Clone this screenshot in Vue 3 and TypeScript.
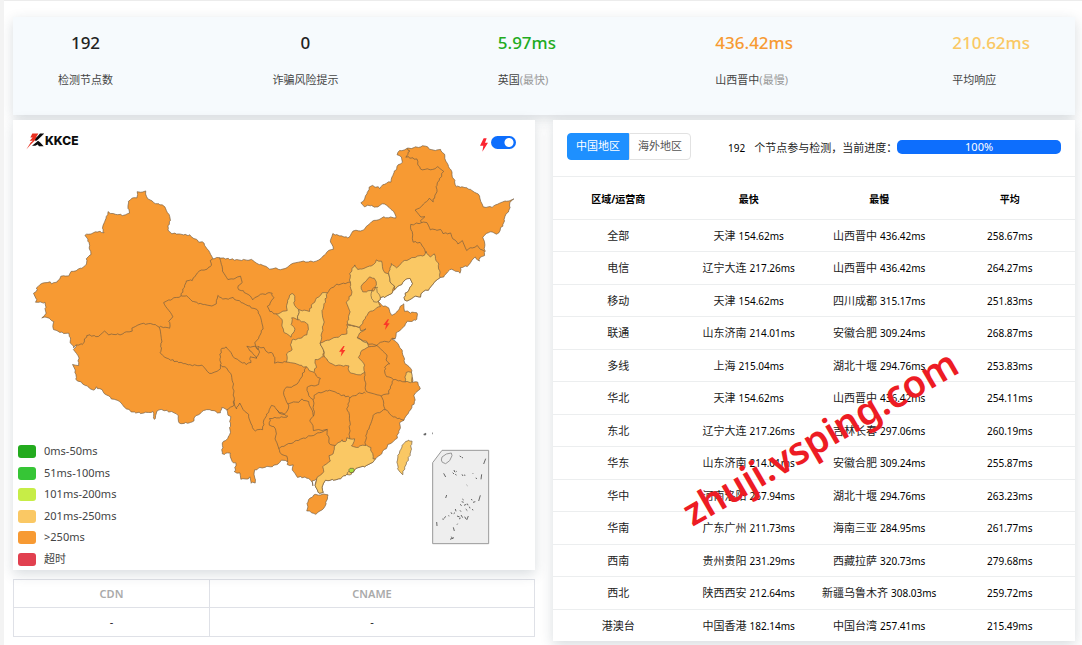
<script setup lang="ts">
import { ref } from 'vue'

interface Stat { value: string; label: string; note?: string; tone: string; centered?: boolean }
interface Row { region: string; fast: [string, string]; slow: [string, string]; avg: string }

const stats: Stat[] = [
  { value: '192', label: '检测节点数', tone: 'dark', centered: true },
  { value: '0', label: '诈骗风险提示', tone: 'dark', centered: true },
  { value: '5.97ms', label: '英国', note: '(最快)', tone: 'green' },
  { value: '436.42ms', label: '山西晋中', note: '(最慢)', tone: 'orange' },
  { value: '210.62ms', label: '平均响应', tone: 'yellow' },
]

const legend = [
  { tone: 'l1', text: '0ms-50ms' },
  { tone: 'l2', text: '51ms-100ms' },
  { tone: 'l3', text: '101ms-200ms' },
  { tone: 'l4', text: '201ms-250ms' },
  { tone: 'l5', text: '>250ms' },
  { tone: 'l6', text: '超时' },
]

const rows: Row[] = [
  { region: '全部', fast: ['天津', '154.62ms'], slow: ['山西晋中', '436.42ms'], avg: '258.67ms' },
  { region: '电信', fast: ['辽宁大连', '217.26ms'], slow: ['山西晋中', '436.42ms'], avg: '264.27ms' },
  { region: '移动', fast: ['天津', '154.62ms'], slow: ['四川成都', '315.17ms'], avg: '251.83ms' },
  { region: '联通', fast: ['山东济南', '214.01ms'], slow: ['安徽合肥', '309.24ms'], avg: '268.87ms' },
  { region: '多线', fast: ['上海', '215.04ms'], slow: ['湖北十堰', '294.76ms'], avg: '253.83ms' },
  { region: '华北', fast: ['天津', '154.62ms'], slow: ['山西晋中', '436.42ms'], avg: '254.11ms' },
  { region: '东北', fast: ['辽宁大连', '217.26ms'], slow: ['吉林长春', '297.06ms'], avg: '260.19ms' },
  { region: '华东', fast: ['山东济南', '214.01ms'], slow: ['安徽合肥', '309.24ms'], avg: '255.87ms' },
  { region: '华中', fast: ['河南洛阳', '267.94ms'], slow: ['湖北十堰', '294.76ms'], avg: '263.23ms' },
  { region: '华南', fast: ['广东广州', '211.73ms'], slow: ['海南三亚', '284.95ms'], avg: '261.77ms' },
  { region: '西南', fast: ['贵州贵阳', '231.29ms'], slow: ['西藏拉萨', '320.73ms'], avg: '279.68ms' },
  { region: '西北', fast: ['陕西西安', '212.64ms'], slow: ['新疆乌鲁木齐', '308.03ms'], avg: '259.72ms' },
  { region: '港澳台', fast: ['中国香港', '182.14ms'], slow: ['中国台湾', '257.41ms'], avg: '215.49ms' },
]

const tab = ref<'cn' | 'overseas'>('cn')
const live = ref(true)
const progress = ref(100)

const mainland =
  '383,216 407,214 408,222 415,235 430,249 445,251 463,259 470,272 478,283 481,300 475,318 474,330 480,339 540,346 568,366 583,368 590,388 607,410 607,416 627,413 680,420 730,420 740,431 760,436 780,446 797,443 810,451 830,441 865,425 910,425 932,415 952,396 970,386 961,362 968,342 1015,353 1030,333 1060,331 1080,308 1120,292 1158,293 1152,275 1125,253 1115,253 1098,262 1080,256 1062,260 1054,248 1064,235 1082,196 1110,204 1125,192 1142,185 1148,165 1165,135 1176,126 1176,110 1160,104 1170,93 1190,86 1246,78 1267,90 1290,90 1302,103 1310,128 1320,145 1333,182 1338,199 1370,203 1392,215 1410,228 1413,250 1420,262 1452,260 1470,248 1512,238 1500,250 1498,270 1485,290 1480,312 1463,343 1440,334 1420,350 1424,380 1424,405 1410,412 1407,424 1395,410 1380,430 1370,438 1353,443 1350,458 1320,447 1300,472 1291,472 1277,482 1255,510 1235,516 1232,530 1210,530 1190,543 1183,540 1186,520 1200,505 1208,490 1200,476 1185,480 1175,492 1152,508 1145,522 1130,530 1112,532 1106,545 1112,555 1135,562 1138,578 1147,588 1165,570 1180,550 1185,572 1200,578 1220,577 1222,598 1205,603 1192,605 1180,622 1160,640 1155,655 1148,658 1168,675 1180,705 1185,730 1205,752 1207,775 1208,787 1225,787 1229,808 1213,825 1214,845 1198,875 1180,900 1168,910 1170,925 1158,960 1135,975 1115,1000 1098,1015 1085,1030 1070,1038 1045,1042 1030,1055 1017,1062 1000,1068 985,1078 945,1082 938,1095 938,1118 923,1118 916,1095 920,1078 908,1082 907,1097 904,1082 890,1073 858,1070 848,1050 848,1036 832,1034 832,1022 816,1022 800,1035 780,1040 750,1043 733,1050 735,1088 722,1088 718,1072 708,1078 692,1076 688,1060 674,1056 678,1030 665,1025 660,998 636,1003 638,970 660,945 661,890 652,885 650,868 636,862 630,880 605,870 585,869 557,888 547,907 508,911 505,888 492,878 455,869 440,875 434,900 430,888 430,874 400,880 365,876 350,865 322,840 305,838 275,810 258,801 252,812 225,795 198,778 196,750 188,735 205,735 206,715 192,690 200,675 192,682 182,667 178,641 155,638 130,628 130,605 110,592 97,592 107,580 106,548 78,546 80,535 72,520 80,515 80,503 103,487 120,485 124,492 140,488 152,470 175,466 185,456 228,438 230,415 242,402 234,356 223,346 270,333 282,340 277,323 295,276 310,282 345,286 357,278 354,250 360,238 380,232'

const orangeParts = [
  '893,1145 910,1125 955,1123 945,1160 917,1183 892,1172',
]

const yellowParts = [
  '800,583 830,570 832,540 845,521 855,530 852,555 868,570 862,598 845,592 845,615 855,630 842,650 820,635 815,600',
  '868,570 898,573 908,550 935,520 952,518 945,545 935,580 942,600 937,630 932,668 940,690 940,710 916,720 918,742 910,758 888,742 855,730 830,726 830,702 845,688 842,670 845,660 870,655 892,643 895,612 862,598',
  '932,668 985,650 1010,640 1012,615 1050,622 1052,632 1066,625 1040,652 1068,665 1078,682 1055,690 1047,712 1063,735 1063,758 1045,765 1017,757 1015,738 970,735 945,715 940,690',
  '1020,487 1020,460 1035,433 1042,450 1070,442 1085,438 1100,420 1113,425 1125,460 1135,462 1140,485 1152,500 1145,522 1130,530 1112,532 1106,545 1110,558 1075,578 1050,622 1012,612 1020,570 1010,548 1025,520',
  '1135,462 1145,430 1158,445 1180,425 1210,412 1245,405 1248,395 1260,410 1272,403 1285,432 1291,472 1277,482 1255,510 1235,516 1232,530 1210,530 1190,543 1183,540 1186,520 1200,505 1208,490 1200,476 1185,480 1175,492 1152,508 1152,500 1140,485',
  '1188,757 1204,757 1207,787 1185,785',
  '975,975 995,960 1005,965 1012,955 1035,958 1025,978 1038,982 1065,975 1082,982 1090,1015 1098,1018 1085,1030 1070,1038 1045,1042 1030,1055 1017,1062 1000,1068 985,1078 945,1082 938,1095 938,1118 923,1118 916,1095 922,1070 940,1055 940,1035 960,1025 958,1008 970,1000',
  '1195,959 1205,965 1202,1000 1185,1040 1178,1063 1163,1048 1162,1012 1180,970',
]

const beijing = '1058,492 1080,470 1098,480 1098,500 1090,512 1060,515 1052,505'

const borders = [
  '607,416 600,422 604,435 590,447 575,450 552,470 548,480 530,482 512,528 462,546 487,592 477,603 480,624 446,620 430,612 400,611 370,620 365,632 330,643 297,643 283,634 265,650 232,645 218,672 200,675',
  '512,528 530,528 540,540 565,550 605,558 620,550 622,526 640,538 668,534 700,550 745,572 750,592 760,620 748,650 735,668 745,688 735,680 712,680 718,692 735,705 740,715 720,710 722,728 710,732 690,725 665,705 650,682 635,684 630,710 632,735',
  '446,620 455,650 452,700 470,715 500,725 540,735 575,737 590,755 605,762 620,755 632,745 632,735 655,748 668,780 672,840 670,860 650,868',
  '740,712 750,695 745,680 760,684 775,697 790,700 795,728 830,726',
  '672,840 678,868 688,850 700,870 715,882 722,910 735,932 758,928 762,900 778,870 785,855 795,858 798,870 820,885 835,870 835,850',
  '627,413 638,440 636,455 655,480 690,470 696,485 682,505 710,520 730,540 745,525 785,518 790,535 773,560 778,573 800,583',
  '952,518 975,495 1020,487',
  '1190,86 1200,92 1188,110 1220,118 1230,148 1275,148 1285,138 1300,155 1280,195 1280,215 1268,245 1260,235 1217,272 1233,290 1243,290 1230,300 1233,308 1202,315 1210,365 1235,370 1245,398',
  '1233,308 1250,308 1260,328 1290,330 1300,340 1320,340 1330,358 1345,370 1358,362 1370,390 1400,378 1424,395',
  '1040,652 1070,670 1100,675 1125,662 1135,668 1148,656 1155,655',
  '1078,682 1100,675 1115,690 1130,705 1130,725 1140,730 1125,740 1125,765 1150,778 1185,786',
  '1150,778 1135,820 1115,828 1125,868 1150,890 1180,900',
  '1063,758 1068,815 1115,828',
  '1068,818 1050,820 1020,832 1012,865 1020,900 1018,955',
  '1125,868 1090,885 1085,905 1070,940 1065,975',
  '910,758 930,775 925,795 890,800 895,825 910,840 915,822 960,810 995,825 1020,832',
  '910,840 912,890 900,900 912,930 950,930 960,975 975,975',
  '888,742 870,780 850,800 825,803 820,825 835,850 865,845 875,838 895,845 905,870 912,890',
  '798,870 835,890 780,895 778,915 798,925 797,955 805,985 860,962 910,945 950,930',
  '805,985 810,998 830,1010 832,1025',
  '1102,500 1092,502 1085,512 1084,535 1092,545 1106,546',
  '1102,500 1102,515 1112,532',
]

/* Splits each edge into short steps and shifts them by a value that depends only
   on position, so that neighbouring provinces keep a common, natural border. */
function trace(points: string, closed: boolean): string {
  const pts = points.split(' ').map((p) => p.split(',').map(Number))
  const out: string[] = []
  const last = closed ? pts.length : pts.length - 1
  for (let i = 0; i < last; i++) {
    const [ax, ay] = pts[i]
    const [bx, by] = pts[(i + 1) % pts.length]
    const n = Math.max(1, Math.round(Math.hypot(bx - ax, by - ay) / 7))
    for (let k = 0; k <= n; k++) {
      const x = ax + ((bx - ax) * k) / n
      const y = ay + ((by - ay) * k) / n
      const dx = Math.sin(x * 0.41 + y * 0.63) * 1.8
      const dy = Math.cos(x * 0.57 - y * 0.39) * 1.8
      out.push(`${(x + dx).toFixed(1)},${(y + dy).toFixed(1)}`)
    }
  }
  return 'M' + out.join('L') + (closed ? 'Z' : '')
}

const islets =
  'M1349,1008l5,3 M1356,1012l3,2 M1427,1016l-6,16 M1301,1060l6,11 M1415,1063l-2,15 M1332,1050l2,6 M1337,1056l3,-2 M1328,1058l4,4 M1336,1062l3,4 M1356,1063l3,5 M1362,1065l4,1 M1388,1059l1,2 M1397,1074l4,2 M1370,1095l2,2 M1310,1125l-3,9 M1411,1126l-5,17 M1357,1137l4,3 M1355,1145l6,2 M1350,1153l5,4 M1362,1156l7,-3 M1372,1151l2,5 M1383,1138l4,2 M1389,1147l7,-2 M1378,1160l2,5 M1367,1167l5,5 M1350,1171l3,4 M1336,1167l2,7 M1323,1177l3,5 M1331,1181l4,-3 M1301,1196l7,-7 M1297,1197l4,1 M1341,1188l8,3 M1353,1185l5,8 M1347,1197l5,-3 M1364,1190l4,7 M1375,1188l-5,12 M1280,1206l1,12 M1330,1222l3,11 M1341,1214l2,-3 M1320,1258l12,-5 M1324,1250l4,7 M1387,1167l2,4 M1315,1187l3,1'
</script>

<template>
  <div class="page">
    <section class="stats card">
      <div v-for="s in stats" :key="s.label" class="stat" :class="{ centered: s.centered }">
        <div class="value" :class="s.tone">{{ s.value }}</div>
        <div class="label">{{ s.label }}<span v-if="s.note" class="note">{{ s.note }}</span></div>
      </div>
    </section>

    <main class="main">
      <div class="left">
        <section class="map card">
          <svg class="china" viewBox="9 0 1566 1350" role="img" aria-label="中国地图">
            <g class="land">
              <path class="orange-fill" :d="trace(mainland, true)" />
              <path v-for="p in orangeParts" :key="p" class="orange-fill" :d="trace(p, true)" />
              <path v-for="p in yellowParts" :key="p" class="yellow-fill" :d="trace(p, true)" />
              <path class="orange-fill" :d="trace(beijing, true)" />
              <path v-for="p in borders" :key="p" class="line" :d="trace(p, false)" />
              <path class="yellow-fill" d="M1012,1058l6,-5 8,8 -6,4 -8,-1z" />
              <path class="lime-fill" d="M1016,1050l4,-5 10,0 3,5 -4,7 -9,1z" />
            </g>
            <path class="inset" d="M1296,991H1436V1271H1268V1028Z" />
            <path class="ring" d="M1296,1011l13,-9 15,-3 2,8 -7,15 -12,9 -10,-4 -3,-7z" />
            <path class="islets" :d="islets" />
            <path class="islets thick" d="M1241,944l5,-2 2,-2 M1242,943h6 M1266,940h2" />
            <g class="bolts">
              <path d="M1133,598l-13,17h8l-3,15 14,-20h-8l6,-12z" />
              <path d="M1000,678l-13,17h8l-3,15 14,-20h-8l6,-12z" />
            </g>
          </svg>

          <div class="map-bar">
            <div class="brand">
              <svg class="brand-icon" viewBox="0 0 54 50" aria-hidden="true">
                <path fill="#e8301f" d="M19 1H37L30 13H36L14 34L1 49L14 28L21 23H11L20 13H13Z" />
                <path fill="#0c0c0c" d="M42 1H55L37 18L29 24L27 20L32 12Z" />
                <path fill="#0c0c0c" d="M36 23L42 27L53 39H39L35 34L28 38H18L31 27Z" />
              </svg>
              <span>KKCE</span>
            </div>
            <div class="switch">
              <svg class="bolt" viewBox="0 0 24 40" aria-hidden="true">
                <path fill="#fb2430" d="M11 0H20L15 13H24L7 40L10 22H0Z" />
              </svg>
              <input v-model="live" type="checkbox" role="switch" aria-label="闪电标记" />
            </div>
          </div>

          <ul class="legend">
            <li v-for="l in legend" :key="l.text">
              <i :class="l.tone"></i><span>{{ l.text }}</span>
            </li>
          </ul>
        </section>

        <table class="dns">
          <thead>
            <tr><th>CDN</th><th>CNAME</th></tr>
          </thead>
          <tbody>
            <tr><td>-</td><td>-</td></tr>
          </tbody>
        </table>
      </div>

      <section class="result card">
        <header class="toolbar">
          <div class="tabs">
            <button type="button" :class="{ active: tab === 'cn' }" @click="tab = 'cn'">中国地区</button>
            <button type="button" :class="{ active: tab === 'overseas' }" @click="tab = 'overseas'">海外地区</button>
          </div>
          <p class="status"><span class="num">192</span><span>个节点参与检测，当前进度：</span></p>
          <div class="progress" role="progressbar" aria-label="当前进度" :aria-valuenow="progress">
            <div class="fill" :style="{ width: progress + '%' }">{{ progress }}%</div>
          </div>
        </header>
        <table class="grid">
          <thead>
            <tr><th>区域/运营商</th><th>最快</th><th>最慢</th><th>平均</th></tr>
          </thead>
          <tbody>
            <tr v-for="r in rows" :key="r.region">
              <td>{{ r.region }}</td>
              <td>{{ r.fast[0] }} <span class="num">{{ r.fast[1] }}</span></td>
              <td>{{ r.slow[0] }} <span class="num">{{ r.slow[1] }}</span></td>
              <td><span class="num">{{ r.avg }}</span></td>
            </tr>
          </tbody>
        </table>
        <div class="watermark">zhuji.vsping.com</div>
      </section>
    </main>
  </div>
</template>

<style>
html {
  background: #f3f3f3;
}
body {
  margin: 0;
}
</style>

<style scoped>
.page {
  box-sizing: border-box;
  min-height: 100vh;
  margin-left: 4px;
  padding: 16px 7px 4px 9px;
  border-top: 1px solid #ececec;
  background: #fff;
  overflow: hidden;
  color: #222;
  font: 11px/16px "Noto Sans", "Noto Sans CJK SC", sans-serif;
}
.card {
  background: #fff;
  box-shadow: 0 4px 12px rgba(40, 60, 75, 0.18);
}
.stats {
  display: flex;
  justify-content: space-between;
  padding: 14px 45px 27px;
  background: #f6fafd;
}
.stat.centered {
  text-align: center;
}
.value {
  font-size: 17px;
  font-weight: 500;
  line-height: 24px;
}
.label {
  margin-top: 17px;
  color: #444;
}
.note {
  color: #999;
}
.dark { color: #222; }
.green { color: #23ab1e; }
.orange { color: #f79a33; }
.yellow { color: #fac864; }

.main {
  display: grid;
  grid-template-columns: 1fr 1fr;
  align-items: start;
  gap: 18px;
  margin-top: 5px;
}
.map {
  position: relative;
}
.china {
  display: block;
  width: 100%;
}
.land {
  stroke: #6e5a42;
  stroke-opacity: 0.65;
  stroke-width: 3;
  stroke-linejoin: round;
}
.orange-fill { fill: #f79a33; }
.yellow-fill { fill: #fac864; }
.lime-fill { fill: #aadf3c; }
.line { fill: none; }
.inset {
  fill: #eee;
  stroke: #999;
  stroke-width: 3;
}
.ring {
  fill: none;
  stroke: #999;
  stroke-width: 3;
}
.islets {
  fill: none;
  stroke: #666;
  stroke-width: 3;
}
.thick {
  stroke-width: 5;
}
.bolts { fill: #fb3728; }

.map-bar {
  position: absolute;
  top: 13px;
  left: 13px;
  right: 19px;
  display: flex;
  justify-content: space-between;
  align-items: flex-start;
}
.brand {
  display: flex;
  align-items: flex-start;
  gap: 1px;
  color: #0c0c0c;
  font: 800 12px/15px Inter, sans-serif;
}
.brand-icon {
  width: 18px;
  height: 17px;
}
.switch {
  display: flex;
  align-items: flex-start;
  gap: 3px;
  margin-top: 3px;
}
.bolt {
  width: 8px;
  height: 14px;
  margin-top: 2px;
}
.switch input {
  appearance: none;
  box-sizing: border-box;
  width: 25px;
  height: 13px;
  margin: 0;
  border-radius: 7px;
  background: #bbb radial-gradient(circle at 7px 50%, #fff 4px, transparent 5px);
}
.switch input:checked {
  background: #0d6efd radial-gradient(circle at 18px 50%, #fff 4px, transparent 5px);
}

.legend {
  position: absolute;
  left: 5px;
  bottom: 4px;
  display: flex;
  flex-direction: column;
  justify-content: space-between;
  height: 121px;
  margin: 0;
  padding: 0;
  list-style: none;
  color: #444;
}
.legend li {
  display: flex;
  align-items: flex-start;
  gap: 8px;
  height: 13px;
  line-height: 11px;
}
.legend i {
  width: 18px;
  height: 13px;
  border-radius: 3px;
}
.l1 { background: #23ab1e; }
.l2 { background: #36c536; }
.l3 { background: #c7ed47; }
.l4 { background: #fac864; }
.l5 { background: #f79a33; }
.l6 { background: #e1404f; }

.dns {
  width: 100%;
  margin-top: 9px;
  border-collapse: collapse;
  background: #fff;
  text-align: center;
}
.dns th,
.dns td {
  height: 28px;
  padding: 0;
  border: 1px solid #dfe1e7;
}
.dns th:first-child {
  width: 195px;
}
.dns th {
  height: 27px;
  color: #aaa;
  font-weight: 600;
}

.result {
  position: relative;
}
.toolbar {
  display: flex;
  align-items: center;
  height: 56px;
  padding: 0 14px;
}
.tabs {
  display: flex;
  margin-top: -4px;
}
.tabs button {
  box-sizing: border-box;
  width: 62px;
  height: 27px;
  padding: 0;
  border: 1px solid #e2e2e2;
  border-radius: 0 4px 4px 0;
  background: #fff;
  color: #555;
  font: inherit;
}
.tabs button:first-child {
  border-radius: 4px 0 0 4px;
}
.tabs button.active {
  border-color: #1e90ff;
  background: #1e90ff;
  color: #fff;
}
.status {
  display: flex;
  gap: 9px;
  margin: 0 0 0 37px;
  white-space: nowrap;
}
.num {
  font-size: 10px;
  color: #000;
}
.progress {
  flex: 1;
  margin-top: -2px;
  border-radius: 5px;
  background: #e9ecef;
  overflow: hidden;
}
.fill {
  background: #0d6efd;
  color: #fff;
  line-height: 14px;
  text-align: center;
}
.grid {
  width: 100%;
  table-layout: fixed;
  border-collapse: separate;
  border-spacing: 0;
  text-align: center;
}
.grid th,
.grid td {
  box-sizing: border-box;
  height: 33px;
  padding: 0;
  border-top: 1px solid #eceeef;
  white-space: nowrap;
}
.grid th {
  height: 43px;
  padding-top: 2px;
  color: #000;
  font-size: 10px;
  font-weight: 700;
}
.grid tbody tr:nth-child(odd) td {
  height: 32px;
}
.watermark {
  position: absolute;
  left: 143px;
  top: 369px;
  color: #ed1c24;
  font-size: 38px;
  font-weight: 600;
  line-height: 44px;
  transform: rotate(-30deg);
  transform-origin: 0 100%;
  white-space: nowrap;
  pointer-events: none;
}
</style>
